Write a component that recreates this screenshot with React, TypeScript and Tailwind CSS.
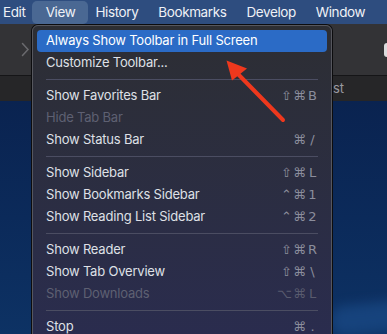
type Item =
  | { kind: "item"; label: string; mods?: string; keyChar?: string; disabled?: boolean; active?: boolean }
  | { kind: "sep" };

const ITEMS: Item[] = [
  { kind: "item", label: "Always Show Toolbar in Full Screen", active: true },
  { kind: "item", label: "Customize Toolbar..." },
  { kind: "sep" },
  { kind: "item", label: "Show Favorites Bar", mods: "⇧⌘", keyChar: "B" },
  { kind: "item", label: "Hide Tab Bar", disabled: true },
  { kind: "item", label: "Show Status Bar", mods: "⌘", keyChar: "/" },
  { kind: "sep" },
  { kind: "item", label: "Show Sidebar", mods: "⇧⌘", keyChar: "L" },
  { kind: "item", label: "Show Bookmarks Sidebar", mods: "⌃⌘", keyChar: "1" },
  { kind: "item", label: "Show Reading List Sidebar", mods: "⌃⌘", keyChar: "2" },
  { kind: "sep" },
  { kind: "item", label: "Show Reader", mods: "⇧⌘", keyChar: "R" },
  { kind: "item", label: "Show Tab Overview", mods: "⇧⌘", keyChar: "\\" },
  { kind: "item", label: "Show Downloads", mods: "⌥⌘", keyChar: "L", disabled: true },
  { kind: "sep" },
  { kind: "item", label: "Stop", mods: "⌘", keyChar: "." },
];

function MenuRow({ item }: { item: Item }) {
  if (item.kind === "sep") {
    return (
      <div className="flex h-[11px] items-center px-[9px]">
        <div className="h-px w-full bg-[#4b4d62]" />
      </div>
    );
  }
  const textColor = item.active
    ? "text-white"
    : item.disabled
      ? "text-[#5e6072]"
      : "text-[#dfe0e6]";
  return (
    <div
      className={`flex h-[22px] items-center justify-between rounded-[4px] pl-[9px] pr-[10px] ${
        item.active ? "bg-[#2b6bc6]" : ""
      }`}
    >
      <span className={`text-[13px] tracking-[-0.2px] ${textColor}`}>{item.label}</span>
      {item.mods && (
        <span
          className={`flex items-center text-[13px] ${
            item.disabled ? "text-[#595b6e]" : "text-[#8b8d9c]"
          }`}
          style={{ fontFamily: '"DejaVu Sans", sans-serif' }}
        >
          <span className="tracking-[1px]">{item.mods}</span>
          <span className="ml-[1px] inline-block w-[9px] text-center">{item.keyChar}</span>
        </span>
      )}
    </div>
  );
}

export default function App() {
  return (
    <div
      className="relative h-[334px] w-[387px] overflow-hidden bg-[#0b2856]"
      style={{ fontFamily: '"Inter", "Liberation Sans", sans-serif' }}
    >
      {/* menu bar */}
      <div className="flex h-[24px] items-center bg-[#2e4d7f] text-[13.5px] tracking-[-0.4px] text-[#eef1f6]">
        <div className="pl-[3px] pr-[7px]">Edit</div>
        <div className="flex h-[23px] w-[56px] items-center justify-center rounded-[5px] bg-[#4a6893]">View</div>
        <div className="pl-[7px] pr-[10px]">History</div>
        <div className="px-[10px]">Bookmarks</div>
        <div className="px-[10px]">Develop</div>
        <div className="px-[10px]">Window</div>
      </div>

      {/* toolbar */}
      <div className="flex h-[51px] items-center justify-between bg-[#333336] pl-[21px]">
        <svg width="9" height="15" viewBox="0 0 9 15" fill="none">
          <path d="M1.5 1.5 L7 7.5 L1.5 13.5" stroke="#6a6a6e" strokeWidth="1.5" strokeLinecap="round" />
        </svg>
        <div className="h-[14px] w-[6px] translate-x-[3px] rounded-[3px] bg-[#dcdcde]" />
      </div>

      {/* tab bar */}
      <div className="flex h-[26px] items-center border-t border-[#151517] bg-[#262628] pl-[333px] text-[13px] text-[#9a9aa0]">
        st
      </div>

      {/* desktop */}
      <div className="relative h-[233px] overflow-hidden bg-gradient-to-b from-[#0a2350] via-[#0b2a5a] to-[#0d3264]">
        <div className="absolute left-[330px] top-[200px] h-[30px] w-[120px] -rotate-6 rounded-full bg-[#1d4f8e] opacity-60 blur-[6px]" />
      </div>

      {/* dropdown menu */}
      <div className="absolute left-[32px] top-[25px] w-[300px] rounded-t-[6px] border border-[#56575e] bg-gradient-to-b from-[#2d2e33] to-[#2a2c4f] px-[4px] pt-[4px] pb-[6px] shadow-[0_0_0_1px_#0c0c0e]">
        {ITEMS.map((it, i) => (
          <MenuRow key={i} item={it} />
        ))}
      </div>

      {/* red arrow */}
      <svg className="absolute left-0 top-0" width="387" height="334" viewBox="0 0 387 334">
        <line x1="283" y1="120" x2="236" y2="72" stroke="#ee381d" strokeWidth="4" strokeLinecap="round" />
        <polygon points="226.5,60.5 232,80.5 247,68.5" fill="#ee381d" />
      </svg>
    </div>
  );
}
